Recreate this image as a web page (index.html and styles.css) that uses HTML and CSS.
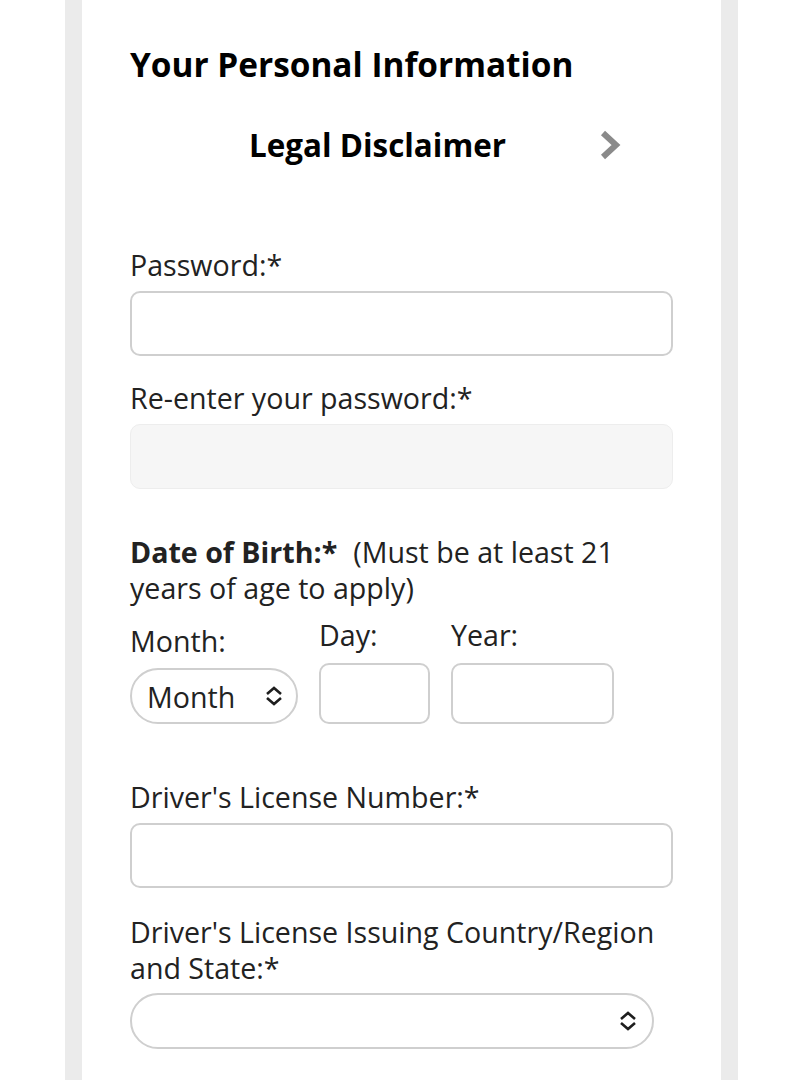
FILE: index.html
```html
<!DOCTYPE html>
<html lang="en">
<head>
<meta charset="utf-8">
<title>Your Personal Information</title>
<link rel="stylesheet" href="styles.css">
</head>
<body>
<div class="page">
  <main class="panel">
    <h1 class="title">Your Personal Information</h1>
    <div class="disclaimer">
      <span class="disclaimer-text">Legal Disclaimer</span>
      <svg class="chev" width="24" height="30" viewBox="0 0 24 30" aria-hidden="true">
        <path d="M5 3 L18 15 L5 27" fill="none" stroke="#8a8a8a" stroke-width="6" stroke-linejoin="miter"/>
      </svg>
    </div>

    <form class="form">
      <label class="label lbl-password" for="pw">Password:*</label>
      <input class="input" id="pw" type="password">

      <label class="label lbl-reenter" for="pw2">Re-enter your password:*</label>
      <input class="input input-disabled" id="pw2" type="password" disabled>

      <p class="label dob"><b class="dob-strong">Date of Birth:*</b><span class="dob-note">(Must be at least 21</span><br><span class="dob-note">years of age to apply)</span></p>

      <div class="date-row">
        <div class="date-col col-month">
          <label class="label" for="month">Month:</label>
          <div class="select-wrap month-wrap">
            <select id="month" class="select month-select">
              <option>Month</option>
            </select>
            <svg class="updown" width="20" height="20" viewBox="0 0 20 20" aria-hidden="true">
              <path d="M3 8 L10 2 L17 8 M3 12 L10 18 L17 12" fill="none" stroke="#1e1e1e" stroke-width="2.6"/>
            </svg>
          </div>
        </div>
        <div class="date-col col-day">
          <label class="label" for="day">Day:</label>
          <input class="input date-input day-input" id="day" type="text">
        </div>
        <div class="date-col col-year">
          <label class="label" for="year">Year:</label>
          <input class="input date-input year-input" id="year" type="text">
        </div>
      </div>

      <label class="label lbl-dl" for="dl">Driver's License Number:*</label>
      <input class="input" id="dl" type="text">

      <label class="label lbl-issuing" for="state">Driver's License Issuing Country/Region and State:*</label>
      <div class="select-wrap state-wrap">
        <select id="state" class="select state-select">
          <option></option>
        </select>
        <svg class="updown" width="20" height="20" viewBox="0 0 20 20" aria-hidden="true">
          <path d="M3 8 L10 2 L17 8 M3 12 L10 18 L17 12" fill="none" stroke="#1e1e1e" stroke-width="2.6"/>
        </svg>
      </div>
    </form>
  </main>
</div>
</body>
</html>
```

FILE: styles.css
```css
html, body {
  margin: 0;
  padding: 0;
  background: #ffffff;
}

body {
  font-family: "Open Sans", "Noto Sans", "Liberation Sans", sans-serif;
  color: #222222;
}

.page {
  margin-left: 65px;
  width: 673px;
  box-sizing: border-box;
  padding: 0 17px;
  background: #ebebeb;
  min-height: 1080px;
}

.panel {
  display: block;
  background: #ffffff;
  min-height: 1080px;
  box-sizing: border-box;
  padding: 41px 48px 0 48px;
}

.title {
  margin: 0;
  font-size: 33.4px;
  line-height: 46px;
  font-weight: 700;
  color: #000000;
}

.disclaimer {
  margin-top: 36px;
  height: 44px;
  display: flex;
  align-items: center;
  padding-left: 119px;
  padding-right: 51px;
}

.disclaimer-text {
  font-size: 31.4px;
  line-height: 44px;
  font-weight: 700;
  color: #000000;
}

.chev {
  margin-left: auto;
  display: block;
}

.form {
  display: flex;
  flex-direction: column;
  margin: 0;
}

.label {
  display: block;
  margin: 0;
  font-size: 28.6px;
  line-height: 36px;
  font-weight: 400;
  color: #222222;
}

.dob-strong {
  font-weight: 700;
  margin-right: 16px;
}

.lbl-password { margin-top: 80px; }
.lbl-reenter { margin-top: 24px; }
.dob { margin-top: 45px; }
.lbl-dl { margin-top: 55px; }
.lbl-issuing { margin-top: 26px; }

.input {
  display: block;
  box-sizing: border-box;
  width: 100%;
  height: 65px;
  margin: 8px 0 0 0;
  border: 2px solid #cfcfcf;
  border-radius: 10px;
  background: #ffffff;
  font-family: inherit;
  font-size: 28px;
  padding: 0 14px;
  outline: none;
}

.input-disabled {
  background: #f6f6f6;
  border: 1px solid #ededed;
}

.date-row {
  margin-top: 11px;
  display: flex;
  align-items: flex-end;
  gap: 21px;
}

.date-col {
  display: flex;
  flex-direction: column;
}

.col-month { width: 168px; }
.col-day { width: 111px; }
.col-year { width: 163px; }

.date-input {
  height: 61px;
  margin-top: 10px;
}

.select-wrap {
  position: relative;
}

.month-wrap {
  margin-top: 9px;
  width: 168px;
}

.state-wrap {
  margin-top: 7px;
  width: 524px;
}

.select {
  display: block;
  box-sizing: border-box;
  width: 100%;
  height: 56px;
  margin: 0;
  border: 2px solid #cfcfcf;
  border-radius: 28px;
  background: #ffffff;
  -webkit-appearance: none;
  appearance: none;
  font-family: inherit;
  font-size: 28.6px;
  color: #222222;
  padding: 0 40px 0 15px;
  outline: none;
}

.updown {
  position: absolute;
  top: 50%;
  margin-top: -10px;
  pointer-events: none;
  display: block;
}

.month-wrap .updown { right: 14px; }
.state-wrap .updown { right: 16px; }
```
